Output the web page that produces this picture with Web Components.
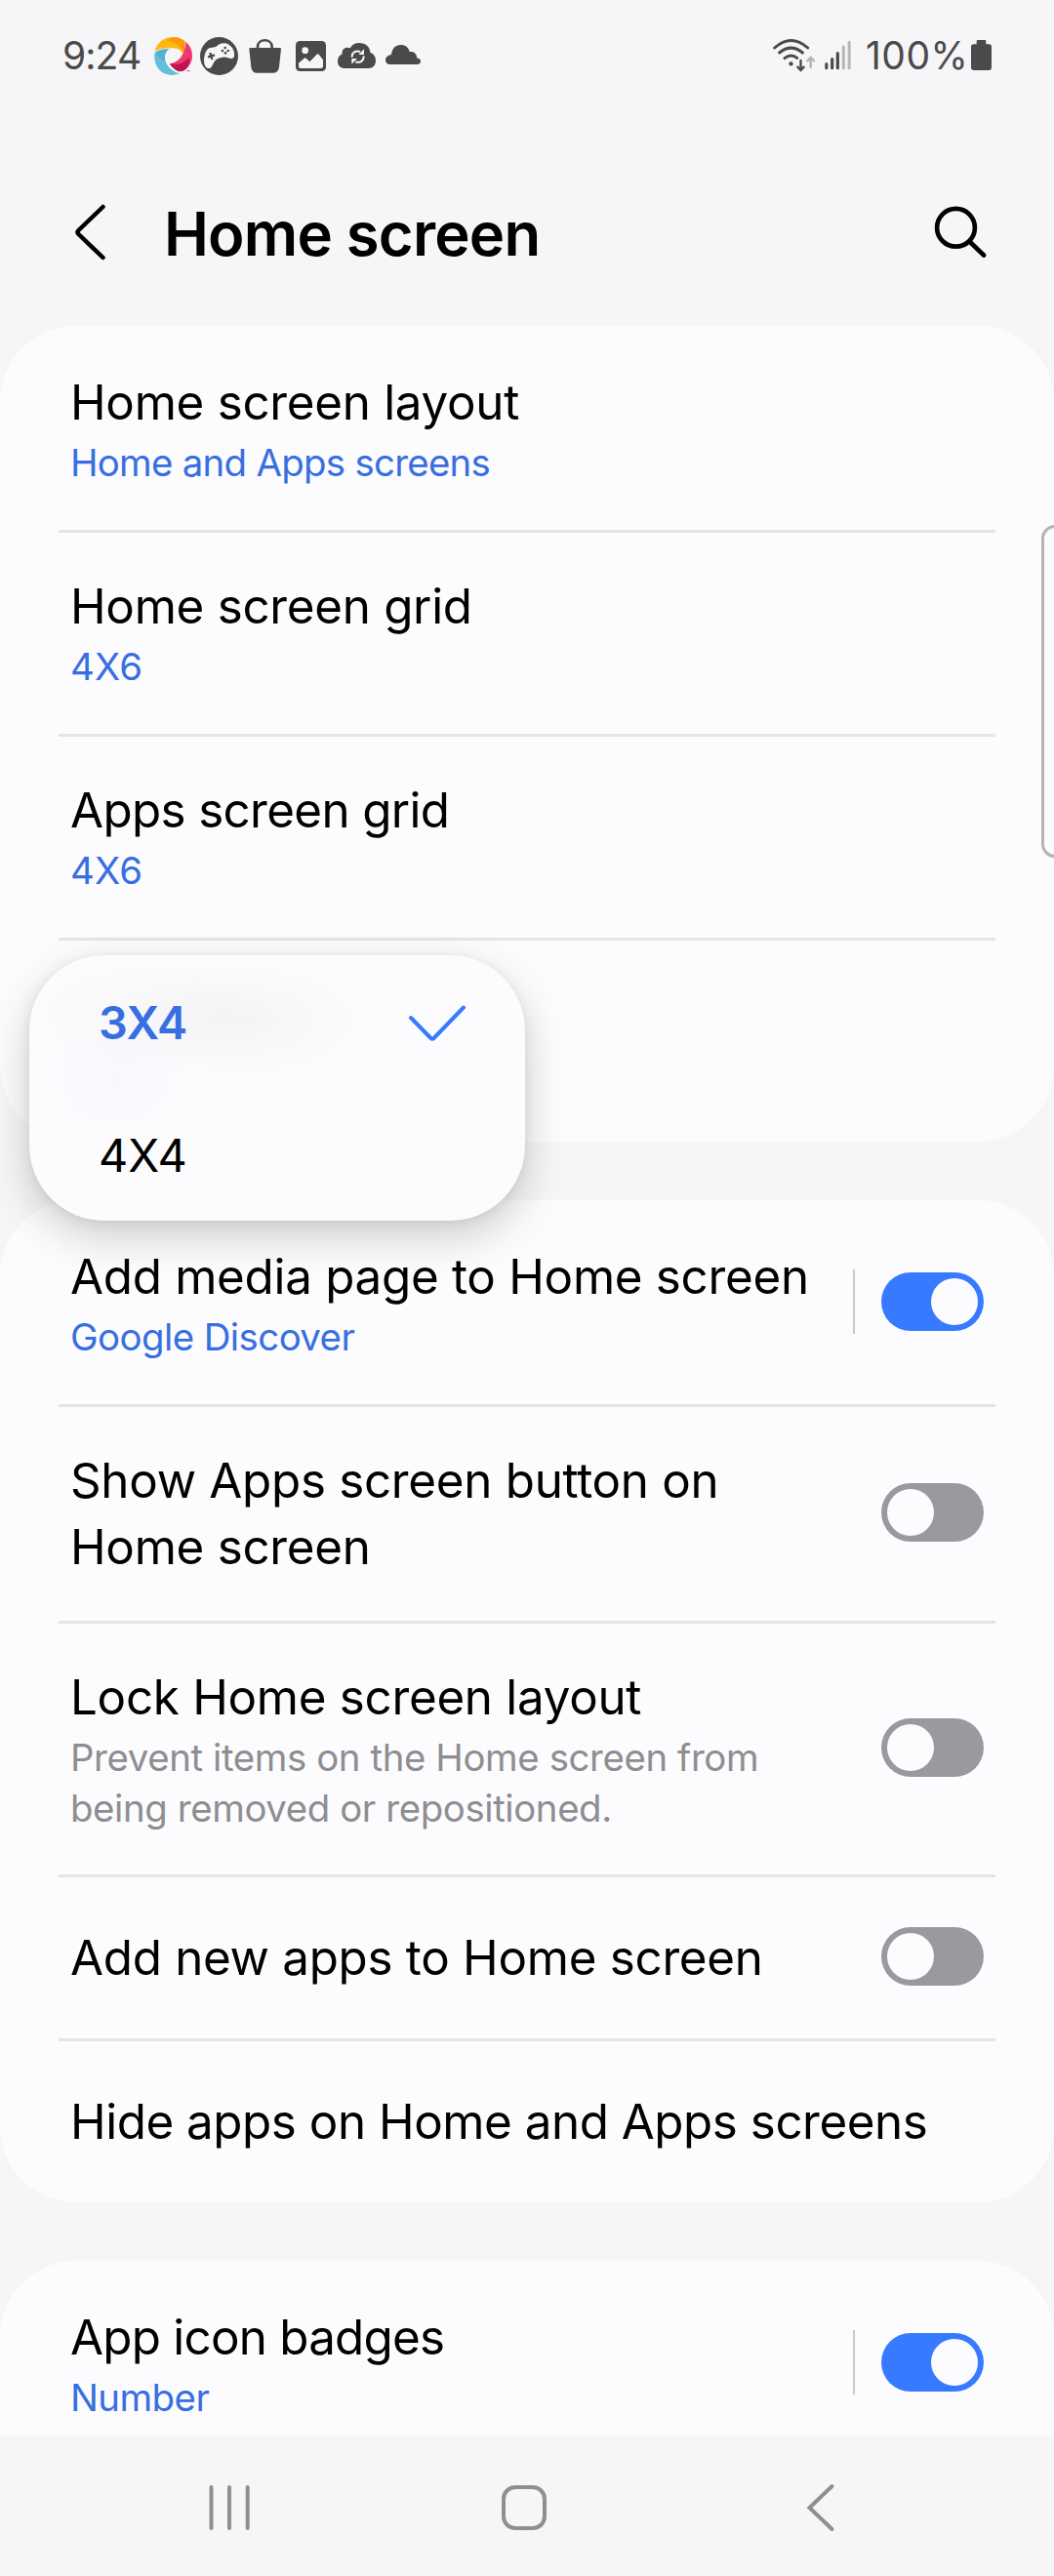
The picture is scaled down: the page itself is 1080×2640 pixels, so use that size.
<!DOCTYPE html>
<html lang="en">
<head>
<meta charset="utf-8">
<title>Home screen settings</title>
<style>
  html, body { margin: 0; padding: 0; background: #f6f6f8; }
  body { width: 1080px; height: 2640px; overflow: hidden; font-family: Inter, "Noto Sans", sans-serif; color: #000; font-variant-ligatures: none; }
</style>
</head>
<body>
<settings-screen>
  <status-bar slot="status"></status-bar>
  <page-header slot="header">Home screen</page-header>

  <settings-card>
    <settings-row style="--sub-ls:-.72px">Home screen layout<span slot="sub">Home and Apps screens</span></settings-row>
    <settings-row style="--sub-ls:.3px">Home screen grid<span slot="sub">4X6</span></settings-row>
    <settings-row style="--ls:-.62px;--sub-ls:.3px">Apps screen grid<span slot="sub">4X6</span></settings-row>
    <settings-row></settings-row>
  </settings-card>

  <settings-card>
    <settings-row split style="--sub-ls:-.57px">Add media page to Home screen<span slot="sub">Google Discover</span><toggle-switch slot="action" on></toggle-switch></settings-row>
    <settings-row style="--h:222px">Show Apps screen button on Home screen<toggle-switch slot="action"></toggle-switch></settings-row>
    <settings-row muted style="--h:260px;--sub-ls:-.4px">Lock Home screen layout<span slot="sub">Prevent items on the Home screen from being removed or repositioned.</span><toggle-switch slot="action"></toggle-switch></settings-row>
    <settings-row single style="--h:168px">Add new apps to Home screen<toggle-switch slot="action"></toggle-switch></settings-row>
    <settings-row single wide style="--h:168px;--ls:-.45px">Hide apps on Home and Apps screens</settings-row>
  </settings-card>

  <settings-card>
    <settings-row split style="--ls:-.74px;--sub-ls:-.55px">App icon badges<span slot="sub">Number</span><toggle-switch slot="action" on></toggle-switch></settings-row>
    <settings-row></settings-row>
  </settings-card>

  <popup-menu slot="overlay">
    <popup-option selected>3X4</popup-option>
    <popup-option>4X4</popup-option>
  </popup-menu>
  <edge-handle slot="overlay"></edge-handle>
  <nav-bar slot="nav"></nav-bar>
</settings-screen>

<script>
const define = (name, html) => {
  const template = document.createElement('template');
  template.innerHTML = html;
  customElements.define(name, class extends HTMLElement {
    constructor() {
      super();
      this.attachShadow({ mode: 'open' }).append(template.content.cloneNode(true));
    }
  });
};

define('settings-screen', `
  <style>
    :host { display: flex; flex-direction: column; position: relative; width: 1080px; height: 2640px; overflow: hidden; background: #f6f6f8; }
    main { flex: 1; min-height: 0; overflow: hidden; display: flex; flex-direction: column; gap: 60px; }
  </style>
  <slot name="status"></slot>
  <slot name="header"></slot>
  <main><slot></slot></main>
  <slot name="nav"></slot>
  <slot name="overlay"></slot>`);

define('status-bar', `
  <style>
    :host { display: flex; justify-content: space-between; height: 114px; box-sizing: border-box; padding: 0 64px 0 64px; color: #4a4a4a; font-size: 39px; line-height: 114px; }
    div { display: flex; align-items: flex-start; }
    svg { display: block; flex: none; margin-top: 38px; height: 40px; }
    .time { width: 94px; letter-spacing: -0.9px; }
    .pct { width: 108px; letter-spacing: .5px; }
  </style>
  <div>
    <span class="time">9:24</span>
    <svg width="39" viewBox="354 54 117 120">
      <path fill="#fdb813" d="M356 97C361 72 384 54 412 54C428 54 441 59 449 68L445 107C438 94 425 88 410 88C390 86 370 90 356 97Z"/>
      <path fill="#fb9a09" d="M412 54C428 54 441 59 449 68L445 107C441 90 425 72 391 64Q402 58 412 54Z"/>
      <path fill="#f0386f" d="M451 69C465 80 471 95 471 112C471 128 464 142 452 152C440 152 425 146 402 136C428 132 448 112 451 69Z"/>
      <path fill="#c2134f" d="M401 135C418 140 437 138 452 125Q458 121 462 116Q466 136 452 152Q440 163 426 158C414 153 406 144 401 135Z"/>
      <path fill="#63bfdc" d="M355 104C368 92 384 89 400 91C386 101 383 118 391 134C399 150 415 162 432 166C420 171 406 172 395 169C369 163 352 138 355 104Z"/>
      <path fill="#3fa9c9" d="M357 100C368 92 384 89 400 91C390 97 384 112 388 128Q368 122 357 100Z" opacity=".55"/>
      <path stroke="#f0386f" stroke-width="3" d="M454 158h10"/>
    </svg>
    <svg width="39" style="margin-left:8px" viewBox="495 54 117 120">
      <circle cx="553.5" cy="112.5" r="58.5" fill="#4a4a4a"/>
      <path fill="#f6f6f8" d="M507 126C508 106 514 90 526 87C536 85 542 86 547 81C553 75 562 71 573 73C591 78 603 95 600 113C598 121 589 122 581 118C569 113 557 117 546 122C537 127 535 142 527 149C516 154 507 144 507 126Z"/>
      <path stroke="#4a4a4a" stroke-width="7" d="M519 115l21-6M526 102l6 21"/>
      <g fill="#4a4a4a"><circle cx="572" cy="87" r="4"/><circle cx="581" cy="96" r="4"/><circle cx="564" cy="96" r="4"/><circle cx="573" cy="103" r="4"/></g>
    </svg>
    <svg width="34" style="margin-left:11px" viewBox="645 54 102 120">
      <path fill="none" stroke="#4a4a4a" stroke-width="8" d="M672 92V84C672 57 716 57 716 84V92"/>
      <path fill="#4a4a4a" d="M646 91Q645 87 650 87H740Q744 87 744 91L738 146Q736 164 718 164H670Q654 164 652 146Z"/>
    </svg>
    <svg width="31" style="margin-left:14px" viewBox="789 54 93 120">
      <rect x="789" y="66" width="93" height="93" rx="13" fill="#4a4a4a"/>
      <circle cx="818" cy="95" r="10" fill="#f6f6f8"/>
      <path fill="#f6f6f8" d="M798 144V134L815 119Q818 117 821 119L832 130L854 107Q857 104 860 107L873 124V144Q873 150 867 150H804Q798 150 798 144Z"/>
    </svg>
    <svg width="39" style="margin-left:12px" viewBox="918 54 117 120">
      <path fill="#4a4a4a" d="M942 150C926 150 918 141 918 128C918 117 924 110 932 106C930 94 938 86 948 86Q953 86 956 88C962 77 972 72 984 72C1004 72 1017 84 1018 101C1029 105 1035 114 1035 126C1035 141 1026 150 1012 150Z"/>
      <g fill="none" stroke="#f6f6f8" stroke-width="6"><path d="M962 116C961 102 974 94 987 99M998 112C999 127 986 135 973 130"/></g>
      <path fill="#f6f6f8" d="M999 91V108H982ZM961 137V120H978Z"/>
    </svg>
    <svg width="36" style="margin-left:10px" viewBox="1063 54 108 120">
      <path fill="#4a4a4a" d="M1077 138C1068 138 1063 132 1063 125C1063 116 1070 110 1081 108C1083 89 1094 78 1110 78C1124 78 1134 86 1137 99C1150 97 1160 105 1159 118C1167 119 1171 123 1171 129C1171 135 1166 138 1160 138Z"/>
    </svg>
  </div>
  <div>
    <svg width="44" viewBox="92 54 132 120">
      <g fill="none" stroke="#4a4a4a" stroke-width="9" stroke-linecap="round">
        <path d="M97 87Q148 42 199 87M112 102Q148 73 183 102M128 119Q148 104 166 118"/>
        <path stroke-width="7" d="M177.500 126V155M168 146L177.500 156L187 146"/>
        <path stroke-width="7" stroke="#b4b4b6" d="M208 147V118M198 127L208 117L218 127"/>
      </g>
      <circle cx="147.500" cy="136" r="6.500" fill="#4a4a4a"/>
    </svg>
    <svg width="27" style="margin-left:9px" viewBox="252 54 81 120">
      <g stroke-width="9.500" stroke-linecap="round" stroke="#4a4a4a"><path d="M257.500 149V137M275 149V122M292 149V104"/><path stroke="#b9b9bb" d="M310 149V84M327.500 149V70"/></g>
    </svg>
    <span class="pct" style="margin-left:15px">100%</span>
    <svg width="21" viewBox="705 54 63 120">
      <path fill="#4a4a4a" d="M722 76V67Q722 63 726 63H747Q751 63 751 67V76H760Q768 76 768 84V147Q768 156 759 156H714Q705 156 705 147V84Q705 76 713 76Z"/>
    </svg>
  </div>`);

define('page-header', `
  <style>
    :host { display: flex; align-items: center; height: 220px; box-sizing: border-box; padding: 28px 68px 0 74px; }
    svg { display: block; flex: none; }
    .find { margin-top: -2px; }
    h1 { flex: 1; margin: 3px 0 0 54px; font-size: 61.6px; font-weight: 600; line-height: 72px; letter-spacing: -.8px; }
  </style>
  <svg class="back" width="40" height="64" viewBox="74 206 40 64"><path d="M105.500 212L80.500 236Q78.500 238 80.500 240L105.500 264" fill="none" stroke="#000" stroke-width="4.500" stroke-linecap="round"/></svg>
  <h1><slot></slot></h1>
  <svg class="find" width="58" height="60" viewBox="954 207 58 60"><g fill="none" stroke="#000" stroke-width="4.700" stroke-linecap="round"><circle cx="979.500" cy="233.300" r="19.400"/><path d="M994 248L1008 261.500"/></g></svg>`);

define('settings-card', `
  <style>
    :host { display: flex; flex-direction: column; flex: none; background: #fcfcfe; border-radius: 78px; overflow: hidden; }
    ::slotted(:first-child) { --line: transparent; }
  </style>
  <slot></slot>`);

define('settings-row', `
  <style>
    :host { display: flex; align-items: flex-start; box-sizing: border-box; height: var(--h, 209px); padding: 44px 72px 0 72px;
      background: linear-gradient(var(--line, #e4e4e6), var(--line, #e4e4e6)) 60px 0 / 960px 3px no-repeat; }
    :host([single]) { padding-top: 51px; }
    .text { width: 774px; flex: none; display: flex; flex-direction: column; gap: 2px; }
    :host([wide]) .text { width: 936px; }
    .title { font-size: 49.3px; line-height: 68px; letter-spacing: var(--ls, -.27px); }
    .sub { font-size: 38.4px; line-height: 52px; letter-spacing: var(--sub-ls, -.47px); color: #386fe0; }
    :host([muted]) .sub { color: #8e8e91; }
    .action { flex: 1; align-self: stretch; margin-top: -45px; display: flex; align-items: center; justify-content: flex-end; gap: 27px; }
    :host([single]) .action { margin-top: -51px; }
    i { display: none; width: 2px; height: 66px; background: #c9c9cb; }
    :host([split]) i { display: block; }
  </style>
  <div class="text"><div class="title"><slot></slot></div><div class="sub"><slot name="sub"></slot></div></div>
  <div class="action"><i></i><slot name="action"></slot></div>`);

define('toggle-switch', `
  <style>
    :host { display: flex; flex: none; box-sizing: border-box; width: 105px; height: 60px; padding: 6px; border-radius: 30px; background: #9a999e; }
    :host([on]) { background: #387aff; justify-content: flex-end; }
    b { width: 48px; height: 48px; border-radius: 50%; background: #fcfcfe; }
  </style>
  <b></b>`);

define('popup-menu', `
  <style>
    :host { position: absolute; left: 30px; top: 979px; width: 508px; height: 272px; display: flex; flex-direction: column; border-radius: 77px;
      background:
        radial-gradient(ellipse 130px 62px at 120px 62px, rgba(60,60,70,.025), transparent),
        radial-gradient(ellipse 130px 62px at 220px 66px, rgba(60,60,70,.035), transparent),
        radial-gradient(ellipse 80px 60px at 88px 128px, rgba(60,110,255,.022), transparent),
        #fcfcfe;
      box-shadow: 0 16px 44px rgba(0,0,0,.19), 0 2px 12px rgba(0,0,0,.07); }
  </style>
  <slot></slot>`);

define('popup-option', `
  <style>
    :host { display: flex; flex: 1; align-items: center; justify-content: space-between; padding: 2px 60px 0 71px; font-size: 46.8px; line-height: 60px; letter-spacing: .1px; }
    :host([selected]) { color: #386fe0; font-weight: 600; letter-spacing: -.3px; }
    svg { display: none; }
    :host([selected]) svg { display: block; }
  </style>
  <span><slot></slot></span>
  <svg width="60" height="38" viewBox="418 1028 60 38"><path d="M421 1042L441.500 1063Q443 1064.500 444.500 1063L475 1031.500" fill="none" stroke="#387aff" stroke-width="4" stroke-linecap="round"/></svg>`);

define('edge-handle', `
  <style>
    :host { position: absolute; left: 1067px; top: 538px; width: 30px; height: 341px; box-sizing: border-box; border: 3px solid #b4b4b6; border-radius: 14px; background: #fcfcfe; }
  </style>`);

define('nav-bar', `
  <style>
    :host { display: flex; align-items: center; flex: none; height: 144px; box-sizing: border-box; padding: 4px 0 0 210px; background: #f6f6f8; }
    svg { display: block; fill: none; stroke: #8f8f90; stroke-width: 4; stroke-linecap: round; }
    .home { margin: 0 261px 0 251px; }
  </style>
  <svg width="50" height="52" viewBox="210 2544 50 52"><path d="M216.500 2549V2591M235 2549V2591M253.700 2549V2591"/></svg>
  <svg class="home" width="52" height="52" viewBox="511 2544 52 52"><rect x="516" y="2549" width="42" height="42" rx="12"/></svg>
  <svg width="34" height="52" viewBox="824 2544 34 52"><path d="M852.500 2548L829.500 2570L852.500 2592"/></svg>`);
</script>
</body>
</html>
